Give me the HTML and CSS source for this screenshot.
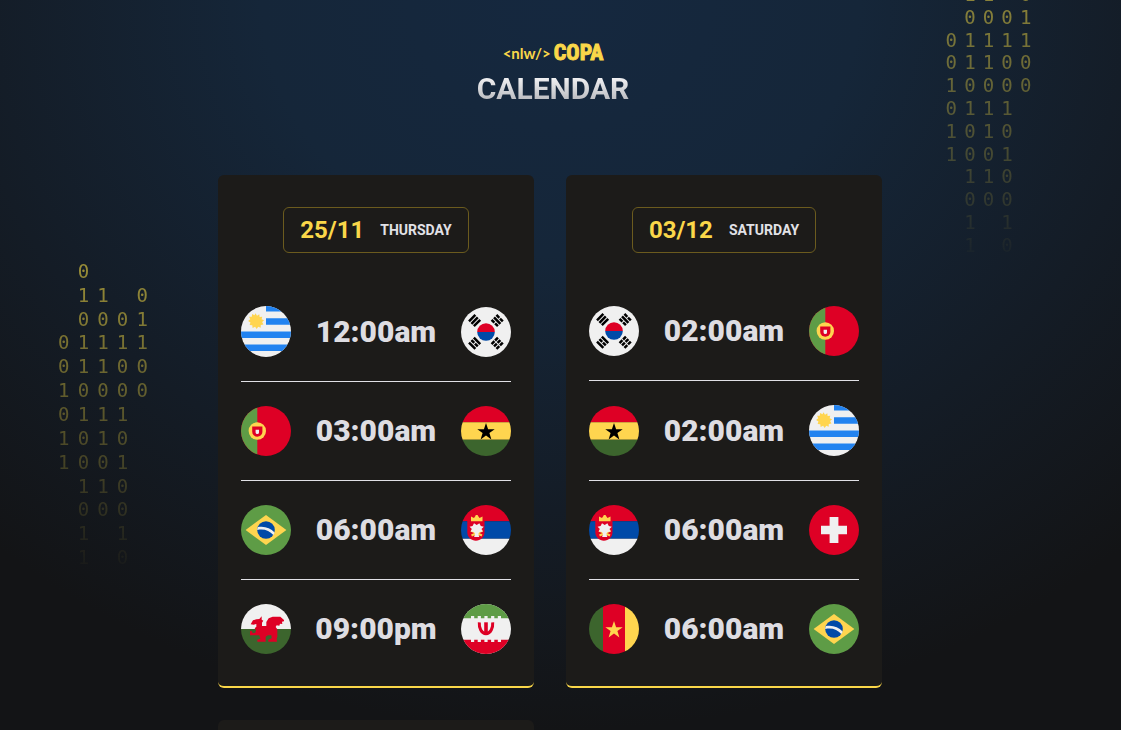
FILE: index.html
```html
<!DOCTYPE html>
<html lang="en">
<head>
<meta charset="utf-8">
<meta name="viewport" content="width=device-width, initial-scale=1">
<title>NLW Copa - Calendar</title>
<link rel="stylesheet" href="styles.css">
</head>
<body>
<svg class="sprite" aria-hidden="true">
  <defs>
    <clipPath id="round"><circle cx="25" cy="25" r="25"/></clipPath>
    <path id="star" d="M0-9 2.1-2.8 8.7-2.8 3.4 1.1 5.4 7.5 0 3.6-5.4 7.5-3.4 1.1-8.7-2.8-2.1-2.8Z"/>
    <symbol id="uruguay" viewBox="0 0 50 50" preserveAspectRatio="none">
      <g clip-path="url(#round)">
        <path fill="#f0f0f0" d="M0 0h50v50H0z"/>
        <path fill="#2283f0" d="M25 0h25v5.3H25zM25 12h25v6.5H25zM0 25h50v6.3H0zM0 37.8h50V44H0z"/>
        <path fill="#ffd54f" d="m14.5 7.2 1.5 2.3 2.3-1.4.3 2.7 2.7-.3-.7 2.6 2.5.9-2 1.8 1.4 2.3-2.7.5-.1 2.7-2.5-1-1.5 2.2-1.6-2.2-2.5 1.2-.3-2.7-2.7-.2.9-2.5-2.4-1.3 2.1-1.7-1.1-2.5 2.7-.1.3-2.7 2.4 1.2z"/>
      </g>
    </symbol>
    <symbol id="korea" viewBox="0 0 50 50">
      <circle cx="25" cy="25" r="25" fill="#f0f0f0"/>
      <path fill="#de0025" d="M16.2 25a8.8 8.8 0 0 1 17.6 0z"/>
      <path fill="#004aa8" d="M16.2 25a8.8 8.8 0 0 0 17.6 0z"/>
      <g fill="#000">
        <path transform="translate(13.6 13.6) rotate(-45)" d="M-4.5-4.700h9v2.500h-9zM-4.500-1.250h9v2.500h-9zM-4.500 2.200h9v2.500h-9z"/>
        <path transform="translate(36.2 13.6) rotate(45)" d="M-4.500-4.700h4v2.500h-4zM.5-4.700h4v2.500h-4zM-4.500-1.250h9v2.500h-9zM-4.500 2.200h4v2.500h-4zM.5 2.200h4v2.500h-4z"/>
        <path transform="translate(13.6 36.3) rotate(45)" d="M-4.500-4.700h9v2.500h-9zM-4.500-1.250h4v2.500h-4zM.5-1.250h4v2.500h-4zM-4.500 2.200h9v2.500h-9z"/>
        <path transform="translate(36.2 36.3) rotate(-45)" d="M-4.500-4.700h4v2.500h-4zM.5-4.700h4v2.500h-4zM-4.500-1.250h4v2.500h-4zM.5-1.250h4v2.500h-4zM-4.500 2.200h4v2.500h-4zM.5 2.200h4v2.500h-4z"/>
      </g>
    </symbol>
    <symbol id="portugal" viewBox="0 0 50 50">
      <g clip-path="url(#round)">
        <path fill="#de0025" d="M0 0h50v50H0z"/>
        <path fill="#5e9c46" d="M0 0h16.3v50H0z"/>
      </g>
      <circle cx="16.3" cy="25" r="8.7" fill="#ffd54f"/>
      <path fill="#de0025" d="M11.2 20.4h10.2v5.3a5.1 5.1 0 0 1-10.2 0z"/>
      <path fill="#f0f0f0" d="M14.6 23.8h3.4v2.6a1.7 1.7 0 0 1-3.4 0z"/>
    </symbol>
    <symbol id="ghana" viewBox="0 0 50 50">
      <g clip-path="url(#round)">
        <path fill="#de0025" d="M0 0h50v16.3H0z"/>
        <path fill="#ffd54f" d="M0 16.3h50v17.4H0z"/>
        <path fill="#3c652d" d="M0 33.7h50V50H0z"/>
      </g>
      <use href="#star" x="25" y="26" fill="#000"/>
    </symbol>
    <symbol id="brazil" viewBox="0 0 50 50">
      <circle cx="25" cy="25" r="25" fill="#5e9c46"/>
      <path fill="#ffd54f" d="M25 10 45.4 25 25 40 4.6 25z"/>
      <circle cx="25" cy="25" r="8.8" fill="#004aa8"/>
      <path fill="#f0f0f0" d="M16.8 22.1c6.2-1.5 12.6.9 16.8 5.3-.3 1-.7 1.900-1.300 2.700-3.800-4.600-9.500-6.500-16.100-5.100 0-1.100.2-2 .6-2.900z"/>
    </symbol>
    <symbol id="serbia" viewBox="0 0 50 50">
      <g clip-path="url(#round)">
        <path fill="#de0025" d="M0 0h50v16.3H0z"/>
        <path fill="#004aa8" d="M0 16.3h50v17.4H0z"/>
        <path fill="#f0f0f0" d="M0 33.7h50V50H0z"/>
      </g>
      <path fill="#de0025" d="M6.300 16h17.200v11c0 5.500-4 8.400-8.600 8.700-4.600-.3-8.600-3.200-8.600-8.700z"/>
      <path fill="#ffd54f" d="M10 16.300V11.500l3 1.600 1.400-2.100h2.700l1.400 2.100 3-1.600v4.800zM14.600 10h2.200v2h-2.200z"/>
      <path fill="none" stroke="#ffd54f" stroke-width="2.200" d="m10 25.500 11 5M21.500 25.500l-11 5"/>
      <path fill="#f0f0f0" d="m13 18.300 2.700 1.700 2.700-1.700 1.400 2.700 3 .8-2.300 2.200 1.200 2.400-3.200.6-1.200 1.800 1 3.200h-5.200l1-3.200-1.200-1.800-3.200-.6 1.200-2.400-2.300-2.200 3-.8z"/>
    </symbol>
    <symbol id="wales" viewBox="0 0 50 50">
      <g clip-path="url(#round)">
        <path fill="#f0f0f0" d="M0 0h50v25H0z"/>
        <path fill="#3c652d" d="M0 25h50v25H0z"/>
      </g>
      <path transform="scale(.3333) translate(-48 -343)" fill="#de0025" d="M77 404 84 392 94 389 103 388 110 380V390L115 393 111 399V409H124V397L131 386 143 381H166L177 391V395L171 396 172 403 165 402 163 408 155 407 152 412 157 419V442L155 446 156 456H130V450L140 446 139 437H129L122 441V456H97V450L106 447 103 437H75V424L81 425 83 431 91 429 93 422 89 416 94 411V403L86 405z"/>
    </symbol>
    <symbol id="iran" viewBox="0 0 50 50">
      <g clip-path="url(#round)">
        <path fill="#f0f0f0" d="M0 0h50v50H0z"/>
        <path fill="#5e9c46" d="M0 0h50v14.3H0z"/>
        <path fill="#de0025" d="M0 35.7h50V50H0z"/>
      </g>
      <path fill="#f0f0f0" d="M10 12h3.200v3H10zM16.700 12h3.200v3h-3.200zM23.400 12h3.200v3h-3.200zM30.100 12h3.200v3h-3.200zM36.800 12H40v3h-3.200zM10 35h3.200v3H10zM16.700 35h3.200v3h-3.200zM23.400 35h3.200v3h-3.200zM30.100 35h3.200v3h-3.200zM36.800 35H40v3h-3.200z"/>
      <path fill="none" stroke="#de0025" stroke-width="3" d="M18.300 18.300c-.4 5.500 2 11.400 6.700 11.400s7.100-5.900 6.700-11.400"/>
      <path fill="#de0025" d="M23.200 18.300h3.600V30h-3.600z"/>
    </symbol>
    <symbol id="switzerland" viewBox="0 0 50 50">
      <circle cx="25" cy="25" r="25" fill="#de0025"/>
      <path fill="#f0f0f0" d="M20.600 12h8.800v8.700H38v8.600h-8.600V38h-8.800v-8.700H12v-8.600h8.600z"/>
    </symbol>
    <symbol id="cameroon" viewBox="0 0 50 50">
      <g clip-path="url(#round)">
        <path fill="#3c652d" d="M0 0h14v50H0z"/>
        <path fill="#de0025" d="M14 0h22v50H14z"/>
        <path fill="#ffd54f" d="M36 0h14v50H36z"/>
      </g>
      <use href="#star" x="25" y="26" fill="#ffd54f"/>
    </symbol>
  </defs>
</svg>

<div class="page">
  <div class="digits digits-left" aria-hidden="true">
    <i></i><i>0</i><i></i><i></i><i></i>
    <i></i><i>1</i><i>1</i><i></i><i>0</i>
    <i></i><i>0</i><i>0</i><i>0</i><i>1</i>
    <i>0</i><i>1</i><i>1</i><i>1</i><i>1</i>
    <i>0</i><i>1</i><i>1</i><i>0</i><i>0</i>
    <i>1</i><i>0</i><i>0</i><i>0</i><i>0</i>
    <i>0</i><i>1</i><i>1</i><i>1</i><i></i>
    <i>1</i><i>0</i><i>1</i><i>0</i><i></i>
    <i>1</i><i>0</i><i>0</i><i>1</i><i></i>
    <i></i><i>1</i><i>1</i><i>0</i><i></i>
    <i></i><i>0</i><i>0</i><i>0</i><i></i>
    <i></i><i>1</i><i></i><i>1</i><i></i>
    <i></i><i>1</i><i></i><i>0</i><i></i>
  </div>
  <div class="digits digits-right" aria-hidden="true">
    <i></i><i>0</i><i></i><i></i><i></i>
    <i></i><i>1</i><i>1</i><i></i><i>0</i>
    <i></i><i>0</i><i>0</i><i>0</i><i>1</i>
    <i>0</i><i>1</i><i>1</i><i>1</i><i>1</i>
    <i>0</i><i>1</i><i>1</i><i>0</i><i>0</i>
    <i>1</i><i>0</i><i>0</i><i>0</i><i>0</i>
    <i>0</i><i>1</i><i>1</i><i>1</i><i></i>
    <i>1</i><i>0</i><i>1</i><i>0</i><i></i>
    <i>1</i><i>0</i><i>0</i><i>1</i><i></i>
    <i></i><i>1</i><i>1</i><i>0</i><i></i>
    <i></i><i>0</i><i>0</i><i>0</i><i></i>
    <i></i><i>1</i><i></i><i>1</i><i></i>
    <i></i><i>1</i><i></i><i>0</i><i></i>
  </div>

  <header class="header">
    <div class="logo"><span class="logo-tag">&lt;nlw/&gt;</span><span class="logo-name">COPA</span></div>
    <h1 class="title">CALENDAR</h1>
  </header>

  <main class="cards">
    <section class="card">
      <h2 class="date">25/11 <span class="day">THURSDAY</span></h2>
      <ul class="games">
        <li class="game"><svg class="flag flag-tall" role="img" aria-label="Uruguay"><use href="#uruguay"/></svg><strong class="time">12:00am</strong><svg class="flag" role="img" aria-label="South Korea"><use href="#korea"/></svg></li>
        <li class="game"><svg class="flag" role="img" aria-label="Portugal"><use href="#portugal"/></svg><strong class="time">03:00am</strong><svg class="flag" role="img" aria-label="Ghana"><use href="#ghana"/></svg></li>
        <li class="game"><svg class="flag" role="img" aria-label="Brazil"><use href="#brazil"/></svg><strong class="time">06:00am</strong><svg class="flag" role="img" aria-label="Serbia"><use href="#serbia"/></svg></li>
        <li class="game"><svg class="flag" role="img" aria-label="Wales"><use href="#wales"/></svg><strong class="time">09:00pm</strong><svg class="flag" role="img" aria-label="Iran"><use href="#iran"/></svg></li>
      </ul>
    </section>
    <section class="card">
      <h2 class="date">03/12 <span class="day">SATURDAY</span></h2>
      <ul class="games">
        <li class="game"><svg class="flag" role="img" aria-label="South Korea"><use href="#korea"/></svg><strong class="time">02:00am</strong><svg class="flag" role="img" aria-label="Portugal"><use href="#portugal"/></svg></li>
        <li class="game"><svg class="flag" role="img" aria-label="Ghana"><use href="#ghana"/></svg><strong class="time">02:00am</strong><svg class="flag flag-tall" role="img" aria-label="Uruguay"><use href="#uruguay"/></svg></li>
        <li class="game"><svg class="flag" role="img" aria-label="Serbia"><use href="#serbia"/></svg><strong class="time">06:00am</strong><svg class="flag" role="img" aria-label="Switzerland"><use href="#switzerland"/></svg></li>
        <li class="game"><svg class="flag" role="img" aria-label="Cameroon"><use href="#cameroon"/></svg><strong class="time">06:00am</strong><svg class="flag" role="img" aria-label="Brazil"><use href="#brazil"/></svg></li>
      </ul>
    </section>
    <section class="card"></section>
  </main>
</div>
</body>
</html>
```
FILE: styles.css
```css
* {
  box-sizing: border-box;
  margin: 0;
  padding: 0;
}

body {
  font-family: Roboto, "Liberation Sans", sans-serif;
  color: #e1e1e6;
  background: #121214;
}

.sprite {
  position: absolute;
  width: 0;
  height: 0;
}

.page {
  position: relative;
  height: 100vh;
  overflow: hidden;
  padding: 43px 15px 0 0;
  background: radial-gradient(ellipse 76% 100% at 50% 0, #15283f 0%, #152639 35%, #141c26 70%, #131416 100%);
}

/* Binary rain on both sides of the page */
.digits {
  position: absolute;
  display: grid;
  grid-template-columns: repeat(5, 1fr);
  grid-auto-rows: 1fr;
  place-items: center;
  font: 19px/20px "DejaVu Sans Mono", monospace;
  color: #f7dd43;
  -webkit-mask-image: linear-gradient(rgba(0, 0, 0, 0.6), rgba(0, 0, 0, 0.02));
  mask-image: linear-gradient(rgba(0, 0, 0, 0.6), rgba(0, 0, 0, 0.02));
}

.digits i {
  font-style: normal;
}

.digits-left {
  top: 259px;
  left: 54px;
  width: 98px;
  height: 310px;
}

.digits-right {
  top: -40px;
  right: 86px;
  width: 93px;
  height: 296px;
}

.header {
  position: relative;
  display: flex;
  flex-direction: column;
  align-items: center;
  gap: 8px;
}

.logo {
  display: flex;
  align-items: center;
  gap: 3px;
  height: 20px;
  color: #fad749;
}

.logo-tag {
  font: 700 15px/20px Lato, sans-serif;
}

.logo-name {
  font: 700 22px/20px "Liberation Sans Narrow", "Roboto Condensed", "Liberation Sans", sans-serif;
  -webkit-text-stroke: 1px #fad749;
}

.title {
  font-size: 30px;
  font-weight: 700;
  line-height: 35px;
  color: transparent;
  background: linear-gradient(#f4f4f6 15%, #b4b6bb 90%);
  -webkit-background-clip: text;
  background-clip: text;
}

.cards {
  position: relative;
  display: flex;
  flex-wrap: wrap;
  gap: 32px;
  max-width: 670px;
  margin: 69px auto 0;
}

.card {
  display: flex;
  flex-direction: column;
  align-items: center;
  width: 316px;
  min-height: 120px;
  padding: 32px 23px;
  background: #1c1b19;
  border-bottom: 2px solid #fad749;
  border-radius: 6px;
}

.date {
  display: flex;
  align-items: center;
  gap: 16px;
  padding: 8px 16px;
  border: 1px solid #6b5b1e;
  border-radius: 6px;
  font-size: 24px;
  font-weight: 700;
  line-height: 28px;
  color: #fad749;
}

.day {
  font-size: 14px;
  color: #e1e1e6;
}

.games {
  align-self: stretch;
  margin-top: 53px;
  list-style: none;
}

.game {
  display: flex;
  align-items: center;
  justify-content: space-between;
}

.game + .game {
  margin-top: 24px;
  padding-top: 24px;
  border-top: 1px solid #e1e1e6;
}

.flag {
  display: block;
  width: 50px;
  height: 50px;
}

.flag-tall {
  height: 51px;
}

.time {
  padding-bottom: 1px;
  font-size: 30px;
  font-weight: 900;
  line-height: 35px;
  color: #dedde2;
}
```
